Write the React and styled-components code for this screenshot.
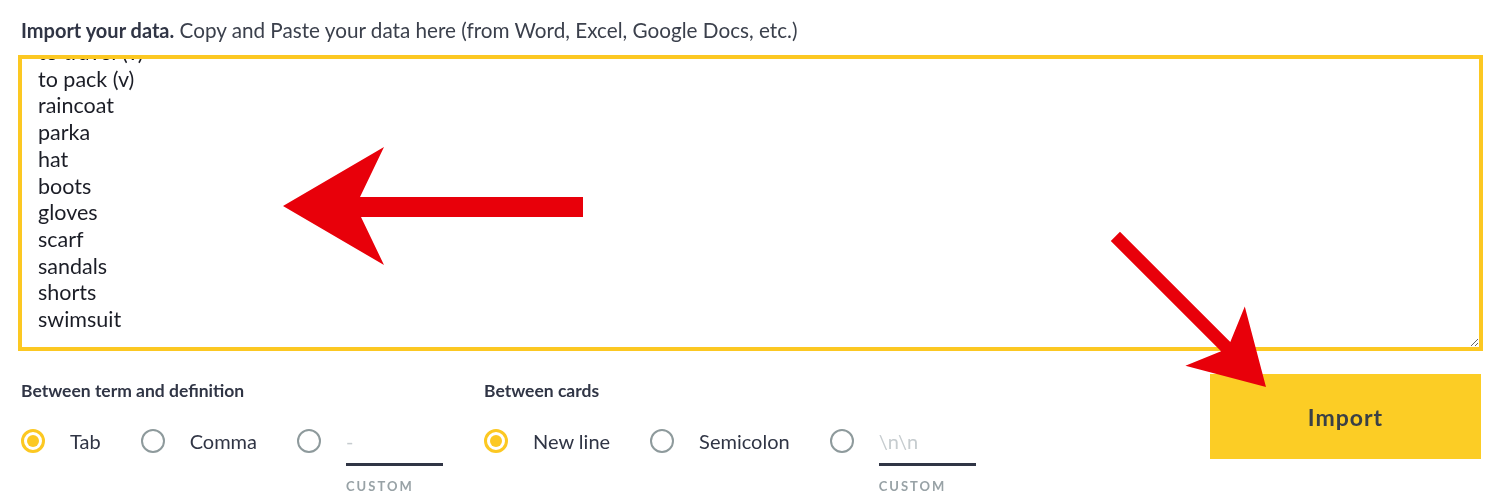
import React, { useEffect, useRef } from 'react'
import styled, { createGlobalStyle } from 'styled-components';

const GlobalStyle = createGlobalStyle`
  body {
    margin: 0;
    background: #fff;
    font-family: Lato, "Open Sans", sans-serif;
  }
`;

const Page = styled.div`
  position: relative;
  height: 491px;
  overflow: hidden;
  padding: 18px 17px 0 18px;
  box-sizing: border-box;
`;

const Heading = styled.p`
  margin: 0 0 13px;
  padding-left: 3px;
  font-size: 20.7px;
  line-height: 24px;
  color: #3b404c;
  b {
    font-size: 20px;
    font-weight: 700;
    color: #303545;
  }
`;

const DataBox = styled.textarea`
  display: block;
  width: 100%;
  height: 296px;
  box-sizing: border-box;
  border: 4px solid #fcc822;
  padding: 8px 18px 8px 16px;
  font-family: Lato, "Open Sans", sans-serif;
  font-size: 21.5px;
  line-height: 26.7px;
  color: #1b1d26;
  outline: none;
  resize: both;
  scrollbar-width: none;
  &::-webkit-scrollbar {
    display: none;
  }
`;

const Controls = styled.div`
  display: flex;
  justify-content: space-between;
  align-items: flex-start;
  margin-top: 23px;
`;

const Groups = styled.div`
  display: flex;
  gap: 41px;
  padding: 7px 0 0 3px;
`;

const Group = styled.div`
  display: flex;
  flex-direction: column;
`;

const GroupLabel = styled.div`
  font-size: 17.5px;
  font-weight: 700;
  line-height: 20px;
  color: #303545;
  margin-bottom: 28px;
`;

const Options = styled.div`
  display: flex;
  align-items: flex-start;
  gap: 40px;
`;

const Option = styled.label`
  display: flex;
  align-items: ${p => (p.$custom ? 'flex-start' : 'center')};
  gap: 25px;
  min-height: 24px;
  font-size: 20px;
  line-height: 24px;
  color: #303545;
  cursor: pointer;
`;

const Radio = styled.span`
  flex: none;
  width: 24px;
  height: 24px;
  box-sizing: border-box;
  border-radius: 50%;
  border: ${p => (p.$on ? '3px solid #fcc822' : '2.5px solid #8e9a9c')};
  display: flex;
  align-items: center;
  justify-content: center;
  &::after {
    content: '';
    width: 12px;
    height: 12px;
    border-radius: 50%;
    background: ${p => (p.$on ? '#fcc822' : 'transparent')};
  }
`;

const Custom = styled.div`
  display: flex;
  flex-direction: column;
`;

const CustomInput = styled.input`
  width: 97px;
  height: 37px;
  box-sizing: border-box;
  border: none;
  border-bottom: 3px solid #303545;
  padding: 0 0 10px;
  font-family: Lato, "Open Sans", sans-serif;
  font-size: 20px;
  line-height: 24px;
  outline: none;
  color: #303545;
  &::placeholder {
    color: #c6cccf;
  }
`;

const CustomCaption = styled.span`
  margin-top: 13px;
  font-size: 13px;
  line-height: 14px;
  font-weight: 700;
  letter-spacing: 2px;
  color: #98a2a6;
`;

const ImportButton = styled.button`
  width: 271px;
  height: 85px;
  margin-right: 2px;
  border: none;
  background: #fccd25;
  font-family: Lato, "Open Sans", sans-serif;
  font-size: 23px;
  font-weight: 700;
  letter-spacing: 1px;
  color: #3a4046;
  cursor: pointer;
`;

const Overlay = styled.svg`
  position: absolute;
  left: 0;
  top: 0;
  pointer-events: none;
`;

const words = [
  'to travel (v)',
  'to pack (v)',
  'raincoat',
  'parka',
  'hat',
  'boots',
  'gloves',
  'scarf',
  'sandals',
  'shorts',
  'swimsuit',
  '',
].join('\n');

const ChoiceGroup = ({ title, choices, placeholder }) => (
  <Group>
    <GroupLabel>{title}</GroupLabel>
    <Options>
      {choices.map((c, i) => (
        <Option key={c}>
          <Radio $on={i === 0} />
          {c}
        </Option>
      ))}
      <Option as="div" $custom>
        <Radio />
        <Custom>
          <CustomInput placeholder={placeholder} />
          <CustomCaption>CUSTOM</CustomCaption>
        </Custom>
      </Option>
    </Options>
  </Group>
);

const App = () => {
  const box = useRef(null);
  useEffect(() => {
    if (box.current) box.current.scrollTop = 28;
  }, []);

  return (
    <Page>
      <GlobalStyle />
      <Heading>
        <b>Import your data.</b> Copy and Paste your data here (from Word, Excel, Google Docs, etc.)
      </Heading>
      <DataBox ref={box} defaultValue={words} spellCheck={false} />
      <Controls>
        <Groups>
          <ChoiceGroup title="Between term and definition" choices={['Tab', 'Comma']} placeholder="-" />
          <ChoiceGroup title="Between cards" choices={['New line', 'Semicolon']} placeholder="\n\n" />
        </Groups>
        <ImportButton>Import</ImportButton>
      </Controls>
      <Overlay width="1500" height="491" viewBox="0 0 1500 491">
        <polygon
          fill="#e8000a"
          points="283,206 384,147 360,197 583,197 583,217 361,217 384,265"
        />
        <polygon
          fill="#e8000a"
          transform="translate(1266 387) rotate(45)"
          points="0,0 -72,-42 -57,-6.5 -213,-6.5 -213,6.5 -57,6.5 -72,42"
        />
      </Overlay>
    </Page>
  )
}

export default App
